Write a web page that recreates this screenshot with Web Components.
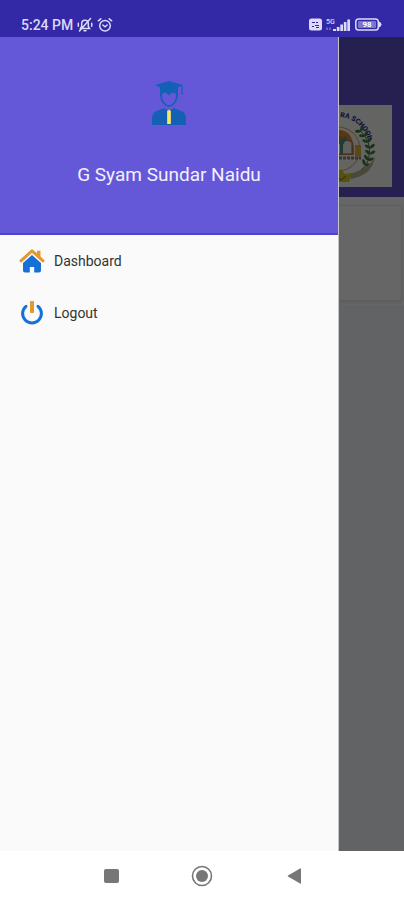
<!DOCTYPE html>
<html lang="en">
<head>
<meta charset="utf-8">
<meta name="viewport" content="width=device-width, initial-scale=1">
<title>Student menu</title>
<style>
html, body { margin: 0; height: 100%; }
body { font-family: Roboto, "Liberation Sans", sans-serif; background: #fff; }
</style>
</head>
<body>
<phone-screen>
  <status-bar slot="status"></status-bar>
  <school-page slot="page"></school-page>
  <nav-drawer slot="drawer" name="G Syam Sundar Naidu">
    <drawer-item label="Dashboard">
      <svg viewBox="0 0 26 26" width="26" height="26" aria-hidden="true">
        <path d="M13 7 4 15v7.500q0 2 2 2h4.800v-5.500h4.400v5.500H20q2 0 2-2V15z" fill="#1670d8"/>
        <path d="M18 2.800h3.500v6.500L18 6.300z" fill="#e39a2c"/>
        <path d="M2 12.800 13 2.800l11 10" fill="none" stroke="#e39a2c" stroke-width="3" stroke-linecap="round" stroke-linejoin="round"/>
      </svg>
    </drawer-item>
    <drawer-item label="Logout">
      <svg viewBox="0 0 26 26" width="26" height="26" aria-hidden="true">
        <path d="M7 6.300a9.400 9.400 0 1 0 12 0" fill="none" stroke="#1670d8" stroke-width="3" stroke-linecap="round"/>
        <rect x="11" y="1" width="4" height="12" rx="1" fill="#e39a2c"/>
      </svg>
    </drawer-item>
  </nav-drawer>
  <system-nav slot="nav"></system-nav>
</phone-screen>
<script>
class Base extends HTMLElement {
  constructor() {
    super();
    this.attachShadow({ mode: "open" }).innerHTML = this.constructor.markup;
  }
}

customElements.define("phone-screen", class extends Base {
  static markup = `
  <style>
    :host { display: grid; grid-template-rows: 37px 1fr 49px; min-height: 100vh; }
    main { position: relative; display: grid; overflow: hidden; }
    .scrim { position: absolute; inset: 0; background: rgba(0,0,0,.6); }
    .drawer { position: absolute; inset: 0 65px 0 0; display: grid; }
  </style>
  <slot name="status"></slot>
  <main>
    <slot name="page"></slot>
    <div class="scrim"></div>
    <div class="drawer"><slot name="drawer"></slot></div>
  </main>
  <slot name="nav"></slot>`;
});

customElements.define("status-bar", class extends Base {
  static markup = `
  <style>
    :host { display: flex; align-items: center; justify-content: space-between; box-sizing: border-box;
      padding: 12px 22px 0 21px; background: #3328a5; color: #dcd9fa; }
    div { display: flex; align-items: center; gap: 4px; }
    time { font-size: 14px; line-height: 16px; font-weight: 500; }
    svg { display: block; }
  </style>
  <div>
    <time>5:24 PM</time>
    <svg width="16" height="16" viewBox="0 0 16 16" fill="none" stroke="#dcd9fa" stroke-width="1.500" stroke-linecap="round" role="img" aria-label="Silent">
      <path d="M3.500 11.500h9L11.300 9.500V6.500a3.300 3.300 0 0 0-6.600 0v3zM7 13.700h2M13.500 1.500 2.500 14M1.300 6.200v3M14.700 6.200v3"/>
    </svg>
    <svg width="16" height="16" viewBox="0 0 16 16" fill="none" stroke="#dcd9fa" stroke-width="1.500" stroke-linecap="round" role="img" aria-label="Alarm">
      <circle cx="8" cy="8.700" r="5.300"/><path d="M5.800 8 8 9.800 10.200 8M1.300 3.800 3.800 1.800M14.700 3.800 12.200 1.800"/>
    </svg>
  </div>
  <div>
    <svg width="13" height="13" viewBox="0 0 13 13" role="img" aria-label="VoLTE">
      <rect width="13" height="12" y=".5" rx="2.500" fill="#dcd9fa"/>
      <path d="M3 4.500h3M7 4.500h2M3 8.500h2M6 7.500h4M7 9.500h3" stroke="#3328a5" stroke-width="1.200"/>
    </svg>
    <svg width="25" height="16" viewBox="0 0 25 16" role="img" aria-label="Signal">
      <text x="0" y="7" font-size="7" font-weight="500" fill="#dcd9fa">5G</text>
      <path d="M1 10.500v2.500M4 10.500v2.500" stroke="#8e87d8" stroke-width="1.200"/>
      <path d="M7 12h3v2H7zM10.800 10h2.700v4h-2.700zM14.300 7.500H17V14h-2.700zM17.800 5h2.700v9h-2.700zM21.300 2.500H24V14h-2.700z" fill="#dcd9fa"/>
    </svg>
    <svg width="27" height="13" viewBox="0 0 27 13" role="img" aria-label="Battery 98">
      <rect x=".8" y="1" width="22.500" height="11" rx="2.800" fill="none" stroke="#dcd9fa" stroke-width="1.500"/>
      <rect x="3" y="3" width="18" height="7" rx="1" fill="#7d76cf"/>
      <path d="M24 3.500q2.500 1 2.500 3t-2.500 3z" fill="#dcd9fa"/>
      <text x="12" y="9.300" font-size="8" font-weight="700" text-anchor="middle" fill="#fff">98</text>
    </svg>
  </div>`;
});

customElements.define("school-page", class extends Base {
  static markup = `
  <style>
    :host { display: flex; flex-direction: column; background: #f2f8fc; }
    header { display: flex; justify-content: flex-end; padding: 68px 12px 10px; background: #5f52c8; }
    .logo { background: #fafaf6; width: 82px; height: 82px; }
    svg { display: block; }
    section { background: #fff; padding: 8px 2px 4px; }
    .card { height: 94px; border: 1px solid #ececec; box-shadow: 0 1px 3px #ddd; }
  </style>
  <header><div class="logo">
    <svg width="82" height="82" viewBox="0 0 82 82" role="img" aria-label="School crest">
      <defs>
        <path id="arc" d="M28 12a31 31 0 0 1 31 31"/>
        <g id="leaf"><ellipse cx="-3" rx="3" ry="1.500" transform="rotate(35)"/><ellipse cx="3" rx="3" ry="1.500" transform="rotate(-35)"/></g>
      </defs>
      <text font-size="7" font-weight="900" fill="#343090"><textPath href="#arc" startOffset="2">RA SCHOOL</textPath></text>
      <circle cx="28" cy="44" r="22" fill="none" stroke="#d6a94e" stroke-width="1"/>
      <path d="M14 43q1-18 15-18 13 0 15 18v7H14z" fill="#dd8b3a"/>
      <path d="M17 49V38q8-5 13 1 5-6 12-2v12z" fill="#f4f1e6" stroke="#8d6e58"/>
      <circle cx="31" cy="34" r="3" fill="#c8753c"/>
      <path d="m30 38-5-4 2-2 4 4 4-5 2 2-4 7v9h-3z" fill="#4c987e"/>
      <path d="M45 40h6v11h-6z" fill="#e2b72f"/>
      <path d="M17 53h34" stroke="#8c877c" stroke-width="3" stroke-dasharray="3 1"/>
      <path d="M50 25q12 12 9 26-1 9-8 14" fill="none" stroke="#427a42"/>
      <g fill="#427a42">
        <use href="#leaf" transform="translate(51 26) rotate(-40)"/>
        <use href="#leaf" transform="translate(55 31) rotate(-30)"/>
        <use href="#leaf" transform="translate(58 37) rotate(-18)"/>
        <use href="#leaf" transform="translate(60 43) rotate(-5)"/>
        <use href="#leaf" transform="translate(60 49) rotate(5)"/>
        <use href="#leaf" transform="translate(58 55) rotate(20)"/>
        <use href="#leaf" transform="translate(55 60) rotate(35)"/>
      </g>
      <path d="M66 51q-7 13-27 18l2 5q16-3 21-13z" fill="#b9b58f"/>
      <path d="m20 68 7 1 4-5 4 5 7-1-3 9H23z" fill="#d8c92e"/>
      <path d="m27 72 4 3 5-4" fill="none" stroke="#9a8c28" stroke-width="1.500"/>
    </svg>
  </div></header>
  <section><div class="card"></div></section>`;
});

customElements.define("nav-drawer", class extends Base {
  static markup = `
  <style>
    :host { display: flex; flex-direction: column; background: #fafafa; border-right: 1px solid #c4c4c8; }
    header { display: flex; flex-direction: column; align-items: center; box-sizing: border-box; height: 198px;
      padding: 43px 16px 0; gap: 37px; background: #6558d8; border-bottom: 2px solid #5044c8; color: #f3f0ff; }
    h1 { margin: 0; font-size: 19px; line-height: 24px; font-weight: 400; }
    ul { display: flex; flex-direction: column; margin: 0; padding: 0; }
  </style>
  <header>
    <svg width="36" height="46" viewBox="0 0 36 46" role="img" aria-label="Student">
      <path d="M4 5 18 1l14 4-5 2.500V12q-9-3-18 0V7.500z" fill="#1460b4"/>
      <path d="M31 5v6" stroke="#1460b4" stroke-width="1.200"/><path d="M31 10.500 32.500 14h-3z" fill="#1460b4"/>
      <path d="M10 11.500v4c0 6 4.500 10.500 8 10.500s8-4.500 8-10.500v-4" fill="none" stroke="#1460b4" stroke-width="1.800"/>
      <path d="M9 10.500q9-3 18 0V16q-2-3-5-3.500-3 1-4 3-1-2-4-3-3 .5-5 3.500z" fill="#1460b4"/>
      <path d="M1 45v-7q0-6 6-7.500l6-2.500 5 3 5-3 6 2.500q6 1.500 6 7.500v7z" fill="#1460b4"/>
      <path d="m16 31 2-1.500 2 1.500v13h-4z" fill="#d8cf78"/>
      <path d="M17 31h2v13h-2z" fill="#fbe94e"/>
    </svg>
    <h1></h1>
  </header>
  <nav><slot></slot></nav>`;
  connectedCallback() { this.shadowRoot.querySelector("h1").textContent = this.getAttribute("name"); }
});

customElements.define("drawer-item", class extends Base {
  static markup = `
  <style>
    :host { display: block; }
    a { display: flex; align-items: center; gap: 9px; height: 52px; padding: 0 19px; color: #333; text-decoration: none;
      font-size: 14px; line-height: 20px; }
  </style>
  <a href="#"><slot></slot><span></span></a>`;
  connectedCallback() { this.shadowRoot.querySelector("span").textContent = this.getAttribute("label"); }
});

customElements.define("system-nav", class extends Base {
  static markup = `
  <style>
    :host { display: flex; align-items: center; justify-content: center; gap: 67px; background: #fff; }
    button { display: grid; place-items: center; width: 24px; height: 24px; padding: 0; border: 0; background: none; }
  </style>
  <button aria-label="Recent apps"><svg width="24" height="24"><rect x="5" y="5" width="15" height="14" rx="2" fill="#777"/></svg></button>
  <button aria-label="Home"><svg width="24" height="24"><circle cx="12" cy="12" r="9.500" fill="none" stroke="#777" stroke-width="1.600"/><circle cx="12" cy="12" r="6" fill="#777"/></svg></button>
  <button aria-label="Back"><svg width="24" height="24"><path d="M20 4.500v15q0 .5-.5.300L7 12.500q-.6-.5 0-1L19.500 4.200q.5-.2.500.3z" fill="#777"/></svg></button>`;
});
</script>
</body>
</html>
